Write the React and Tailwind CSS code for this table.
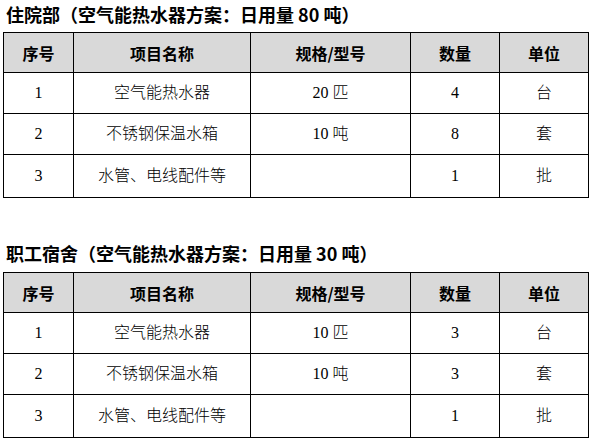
import React from "react";

const sections = [
  {
    title: "住院部（空气能热水器方案：日用量 80 吨）",
    rows: [
      { no: "1", name: "空气能热水器", spec: "20 匹", qty: "4", unit: "台" },
      { no: "2", name: "不锈钢保温水箱", spec: "10 吨", qty: "8", unit: "套" },
      { no: "3", name: "水管、电线配件等", spec: "", qty: "1", unit: "批" },
    ],
  },
  {
    title: "职工宿舍（空气能热水器方案：日用量 30 吨）",
    rows: [
      { no: "1", name: "空气能热水器", spec: "10 匹", qty: "3", unit: "台" },
      { no: "2", name: "不锈钢保温水箱", spec: "10 吨", qty: "3", unit: "套" },
      { no: "3", name: "水管、电线配件等", spec: "", qty: "1", unit: "批" },
    ],
  },
];

const rowHeights = ["h-[41px]", "h-[41px]", "h-[43px]"];

const PlanTable = ({ rows }) => (
  <table className="ml-[3px] w-[585px] table-fixed border-collapse text-center text-black">
    <colgroup>
      <col className="w-[70px]" />
      <col className="w-[177px]" />
      <col className="w-[160px]" />
      <col className="w-[89px]" />
      <col className="w-[89px]" />
    </colgroup>
    <thead>
      <tr className="h-[40px] bg-[#d9d9d9] text-[16px] font-bold [font-family:'Noto_Sans_CJK_SC',sans-serif]">
        <th className="border border-black">序号</th>
        <th className="border border-black">项目名称</th>
        <th className="border border-black">规格/型号</th>
        <th className="border border-black">数量</th>
        <th className="border border-black">单位</th>
      </tr>
    </thead>
    <tbody className="text-[16px] font-light [font-family:'Liberation_Serif','Noto_Sans_CJK_SC',serif]">
      {rows.map((row, i) => (
        <tr key={row.no} className={rowHeights[i]}>
          <td className="border border-black">{row.no}</td>
          <td className="border border-black">{row.name}</td>
          <td className="border border-black">{row.spec}</td>
          <td className="border border-black">{row.qty}</td>
          <td className="border border-black">{row.unit}</td>
        </tr>
      ))}
    </tbody>
  </table>
);

const App = () => {
  return (
    <div className="w-[592px] h-[442px] bg-white overflow-hidden">
      <div className="h-[32px] pl-[6px] pt-[4px] text-[18px] leading-[20px] font-bold text-black [font-family:'Noto_Sans_CJK_SC',sans-serif]">
        {sections[0].title}
      </div>
      <PlanTable rows={sections[0].rows} />
      <div className="h-[74px] flex items-end pl-[6px] pb-[9px] text-[18px] leading-[20px] font-bold text-black [font-family:'Noto_Sans_CJK_SC',sans-serif]">
        {sections[1].title}
      </div>
      <PlanTable rows={sections[1].rows} />
    </div>
  );
};

export default App;
